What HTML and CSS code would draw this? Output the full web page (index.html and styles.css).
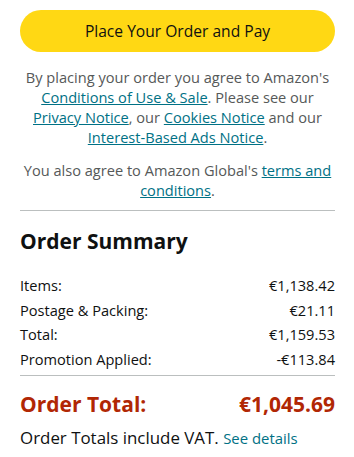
FILE: index.html
```html
<!DOCTYPE html>
<html lang="en">
<head>
<meta charset="utf-8">
<link rel="stylesheet" href="styles.css">
</head>
<body>
<div class="page">
  <button class="place-btn">Place Your Order and Pay</button>
  <p class="legal">By placing your order you agree to Amazon's <a href="#">Conditions of Use &amp; Sale</a>. Please see our <a href="#">Privacy Notice</a>, our <a href="#">Cookies Notice</a> and our <a href="#">Interest-Based Ads Notice</a>.</p>
  <p class="legal legal-2">You also agree to Amazon Global's <a href="#">terms and conditions</a>.</p>
  <hr class="divider">
  <h2 class="summary-title">Order Summary</h2>
  <div class="rows">
    <div class="row"><span>Items:</span><span>€1,138.42</span></div>
    <div class="row"><span>Postage &amp; Packing:</span><span>€21.11</span></div>
    <div class="row"><span>Total:</span><span>€1,159.53</span></div>
    <div class="row"><span>Promotion Applied:</span><span>-€113.84</span></div>
  </div>
  <hr class="divider divider-2">
  <div class="total-row"><span>Order Total:</span><span>€1,045.69</span></div>
  <p class="vat">Order Totals include VAT. <a href="#">See details</a></p>
</div>
</body>
</html>
```
FILE: styles.css
```css
* { box-sizing: border-box; }
html, body { margin: 0; padding: 0; background: #fff; }
body {
  font-family: "Open Sans", "Noto Sans", sans-serif;
  color: #0F1111;
  width: 354px;
}
.page {
  padding: 10px 19px 0 20px;
  display: flex;
  flex-direction: column;
}
.place-btn {
  width: 315px;
  height: 42px;
  border: none;
  border-radius: 21px;
  background: #FFD814;
  color: #0F1111;
  font-family: inherit;
  font-size: 15.6px;
  padding: 0;
}
.legal {
  margin: 15px 0 0;
  font-size: 14.6px;
  line-height: 20px;
  color: #565959;
  text-align: center;
}
.legal a { color: #007185; text-decoration: underline; }
.legal-2 { margin-top: 13px; }
.divider {
  margin: 10px 0 0;
  border: none;
  border-top: 1px solid #BBBFBF;
  width: 315px;
}
.summary-title {
  margin: 17px 0 0;
  font-size: 21px;
  line-height: 26px;
  font-weight: 700;
}
.rows { margin-top: 19px; display: flex; flex-direction: column; }
.row {
  display: flex;
  justify-content: space-between;
  font-size: 14.6px;
  line-height: 24.5px;
}
.divider-2 { margin-top: 4px; }
.total-row {
  margin-top: 14px;
  display: flex;
  justify-content: space-between;
  font-size: 21px;
  line-height: 28px;
  font-weight: 700;
  color: #B12704;
}
.vat {
  margin: 9px 0 0;
  font-size: 16.9px;
  line-height: 22px;
}
.vat a { color: #007185; text-decoration: none; font-size: 14.9px; }
```
